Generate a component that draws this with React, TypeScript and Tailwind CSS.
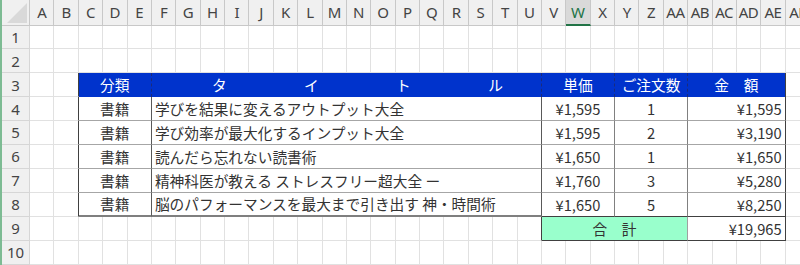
import React from 'react';

// ===========================================
// CONSTANTS
// ===========================================

const COLUMNS = [
  'A', 'B', 'C', 'D', 'E', 'F', 'G', 'H', 'I', 'J', 'K', 'L', 'M', 'N', 'O', 'P',
  'Q', 'R', 'S', 'T', 'U', 'V', 'W', 'X', 'Y', 'Z', 'AA', 'AB', 'AC', 'AD', 'AE', 'AF',
];

const ORDERS = [
  { kind: '書籍', title: '学びを結果に変えるアウトプット大全', price: '¥1,595', qty: '1', amount: '¥1,595' },
  { kind: '書籍', title: '学び効率が最大化するインプット大全', price: '¥1,595', qty: '2', amount: '¥3,190' },
  { kind: '書籍', title: '読んだら忘れない読書術', price: '¥1,650', qty: '1', amount: '¥1,650' },
  { kind: '書籍', title: '精神科医が教える ストレスフリー超大全 ー', price: '¥1,760', qty: '3', amount: '¥5,280' },
  { kind: '書籍', title: '脳のパフォーマンスを最大まで引き出す 神・時間術', price: '¥1,650', qty: '5', amount: '¥8,250' },
];

const GRID = 'grid grid-cols-[28px_repeat(32,24.39px)] h-[24.4px]';
const CELL_FONT = "font-['Noto_Sans_CJK_JP',sans-serif] text-[14.7px] text-[#333]";

// ===========================================
// PIECES
// ===========================================

const Empty: React.FC<{ className?: string }> = ({ className = '' }) => (
  <div className={`border-r border-b border-[#e1e1e1] ${className}`} />
);

const Blanks: React.FC<{ count: number }> = ({ count }) => (
  <>
    {Array.from({ length: count }).map((_, i) => (
      <Empty key={i} />
    ))}
  </>
);

const Row: React.FC<{ n: number; children: React.ReactNode }> = ({ n, children }) => (
  <div className={GRID}>
    <div className="flex items-center justify-center bg-[#f0f0f0] border-r border-b border-[#d6d6d6] font-['Noto_Sans',sans-serif] text-[15px] text-[#444]">
      {n}
    </div>
    {children}
  </div>
);

// ===========================================
// COMPONENT
// ===========================================

export default function App() {
  return (
    <div className="w-[800px] h-[265px] overflow-hidden bg-white flex">
      {/* window edge */}
      <div className="w-[2px] shrink-0 bg-[#7dbb93]" />

      <div className="flex flex-col">
        {/* ==================== COLUMN HEADERS ==================== */}
        <div className="grid grid-cols-[28px_repeat(32,24.39px)] h-[26px] bg-[#f0f0f0]">
          <div className="relative border-r border-b border-[#c8c8c8]">
            <svg className="absolute right-[2px] bottom-[2px]" width="20" height="20" viewBox="0 0 20 20">
              <polygon points="20,0 20,20 0,20" fill="#d9d9d9" />
            </svg>
          </div>
          {COLUMNS.map((c) =>
            c === 'W' ? (
              <div
                key={c}
                className="flex items-center justify-center bg-[#d9d9d9] border-r border-[#c8c8c8] border-b-2 border-b-[#217346] font-['Noto_Sans',sans-serif] text-[15px] text-[#217346]"
              >
                {c}
              </div>
            ) : (
              <div
                key={c}
                className="flex items-center justify-center border-r border-b border-[#c8c8c8] font-['Noto_Sans',sans-serif] text-[15px] text-[#444] tracking-[-0.5px]"
              >
                {c}
              </div>
            ),
          )}
        </div>

        <Row n={1}>
          <Blanks count={32} />
        </Row>
        <Row n={2}>
          <Blanks count={32} />
        </Row>

        {/* ==================== TABLE HEADER ==================== */}
        <Row n={3}>
          <Empty />
          <Empty className="border-r-[#404040]" />
          <div className={`col-span-3 flex items-center justify-center bg-[#0033cc] border-r border-dashed border-r-[#1a2b7a] ${CELL_FONT} text-white`}>
            分類
          </div>
          <div className={`col-span-16 flex items-center justify-between pl-[60px] pr-[38px] bg-[#0033cc] border-r border-dashed border-r-[#1a2b7a] ${CELL_FONT} text-white`}>
            <span>タ</span>
            <span>イ</span>
            <span>ト</span>
            <span>ル</span>
          </div>
          <div className={`col-span-3 flex items-center justify-center bg-[#0033cc] border-r border-dashed border-r-[#1a2b7a] ${CELL_FONT} text-white`}>
            単価
          </div>
          <div className={`col-span-3 flex items-center justify-center bg-[#0033cc] border-r border-dashed border-r-[#1a2b7a] ${CELL_FONT} text-white`}>
            ご注文数
          </div>
          <div className={`col-span-4 flex items-center justify-center bg-[#0033cc] border-r border-r-[#404040] ${CELL_FONT} text-white`}>
            金　額
          </div>
          <Empty />
        </Row>

        {/* ==================== ORDER ROWS ==================== */}
        {ORDERS.map((o, i) => {
          const last = i === ORDERS.length - 1;
          const leftBottom = last ? 'border-b-2 border-b-[#7f7f7f]' : 'border-b border-b-[#a6a6a6]';
          const rightBottom = last ? 'border-b border-b-[#404040]' : 'border-b border-b-[#a6a6a6]';
          return (
            <Row key={i} n={4 + i}>
              <Empty />
              <Empty className="border-r-[#404040]" />
              <div className={`col-span-3 flex items-center justify-center border-r border-r-[#595959] ${leftBottom} ${CELL_FONT}`}>
                {o.kind}
              </div>
              <div className={`col-span-16 flex items-center pl-[3px] whitespace-nowrap overflow-hidden border-r border-r-[#595959] ${leftBottom} ${CELL_FONT}`}>
                {o.title}
              </div>
              <div className={`col-span-3 flex items-center justify-center border-r border-r-[#808080] ${rightBottom} ${CELL_FONT}`}>
                {o.price}
              </div>
              <div className={`col-span-3 flex items-center justify-center border-r border-r-[#808080] ${rightBottom} ${CELL_FONT}`}>
                {o.qty}
              </div>
              <div className={`col-span-4 flex items-center justify-end pr-[3px] border-r border-r-[#404040] ${rightBottom} ${CELL_FONT}`}>
                {o.amount}
              </div>
              <Empty />
            </Row>
          );
        })}

        {/* ==================== TOTAL ==================== */}
        <Row n={9}>
          <Blanks count={20} />
          <Empty className="border-r-[#404040]" />
          <div className={`col-span-6 flex items-center justify-center bg-[#99ffcc] border-r border-r-[#a0a0a0] border-b border-b-[#404040] ${CELL_FONT}`}>
            合　計
          </div>
          <div className={`col-span-4 flex items-center justify-end pr-[3px] border-r border-r-[#404040] border-b border-b-[#404040] ${CELL_FONT}`}>
            ¥19,965
          </div>
          <Empty />
        </Row>

        <Row n={10}>
          <Blanks count={32} />
        </Row>
      </div>
    </div>
  );
}
